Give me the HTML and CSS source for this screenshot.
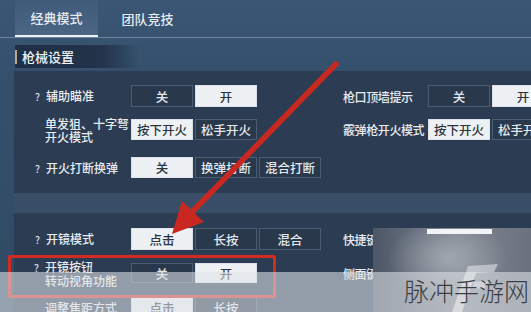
FILE: index.html
```html
<!DOCTYPE html>
<html lang="zh">
<head>
<meta charset="utf-8">
<link rel="stylesheet" href="styles.css">
</head>
<body>
<div class="page">
  <div class="tabs">
    <div class="tab active">经典模式</div>
    <div class="tab">团队竞技</div>
  </div>
  <div class="section-title"><span class="bar"></span><span>枪械设置</span></div>

  <div class="panel panel-1">
    <div class="row r1">
      <div class="half">
        <div class="label"><i>?</i>辅助瞄准</div>
        <div class="seg"><b>关</b><b class="on">开</b></div>
      </div>
      <div class="half right">
        <div class="label">枪口顶墙提示</div>
        <div class="seg"><b>关</b><b class="on">开</b></div>
      </div>
    </div>
    <div class="row r2">
      <div class="half">
        <div class="label two">单发狙、十字弩<br>开火模式</div>
        <div class="seg"><b class="on">按下开火</b><b>松手开火</b></div>
      </div>
      <div class="half right">
        <div class="label">霰弹枪开火模式</div>
        <div class="seg"><b class="on">按下开火</b><b>松手开火</b></div>
      </div>
    </div>
    <div class="row r3">
      <div class="half">
        <div class="label"><i>?</i>开火打断换弹</div>
        <div class="seg"><b class="on">关</b><b>换弹打断</b><b>混合打断</b></div>
      </div>
    </div>
  </div>

  <div class="band"></div>

  <div class="panel panel-2">
    <div class="row s1">
      <div class="half">
        <div class="label"><i>?</i>开镜模式</div>
        <div class="seg"><b class="on">点击</b><b>长按</b><b>混合</b></div>
      </div>
      <div class="half right">
        <div class="label">快捷键位</div>
      </div>
    </div>
    <div class="row s2">
      <div class="half">
        <div class="label two"><i>?</i>开镜按钮<br>转动视角功能</div>
        <div class="seg"><b>关</b><b class="on">开</b></div>
      </div>
      <div class="half right">
        <div class="label">侧面键位</div>
      </div>
    </div>
    <div class="row s3">
      <div class="half">
        <div class="label"><span class="indent">调整焦距方式</span></div>
        <div class="seg"><b class="on">点击</b><b>长按</b></div>
      </div>
    </div>
  </div>

  <div class="pasted"><span class="pasted-bar"></span></div>
  <div class="highlight"></div>

  <svg class="arrow" width="531" height="312" viewBox="0 0 531 312">
    <line x1="336" y1="64" x2="192" y2="212" stroke="#c8281f" stroke-width="5.5" stroke-linecap="round"/>
    <polygon points="172,234 182,201 204,222" fill="#c8281f"/>
  </svg>

  <div class="watermark">
    <svg class="wm-logo" width="60" height="50" viewBox="0 0 60 50">
      <polygon points="20,4 50,2 46,10 28,11 14,50 4,50" fill="#ffffff" fill-opacity="0.45"/>
      <polygon points="26,20 40,19 37,26 24,27" fill="#ffffff" fill-opacity="0.35"/>
    </svg>
    <span class="wm-text">脉冲手游网</span>
  </div>
</div>
</body>
</html>
```

FILE: styles.css
```css
* { box-sizing: border-box; margin: 0; padding: 0; }

html, body {
  width: 531px;
  height: 312px;
  overflow: hidden;
}

body {
  background: #36506c;
  font-family: "Noto Sans CJK SC", "Noto Sans", sans-serif;
  color: #e8ecf0;
}

.page {
  position: relative;
  width: 531px;
  height: 312px;
  overflow: hidden;
  background: linear-gradient(180deg, #3a5674 0%, #34506c 25%, #314a64 100%);
}

.tabs {
  display: flex;
  height: 38px;
  padding-left: 15px;
  border-bottom: 1px solid #6f87a0;
}

.tab {
  width: 83px;
  height: 37px;
  display: flex;
  align-items: center;
  justify-content: center;
  font-size: 13px;
  font-weight: 500;
  color: #e6ebf1;
  margin-right: 8px;
}

.tab.active {
  background: linear-gradient(180deg, #3f5b79 0%, #4a6684 100%);
  border-bottom: 2px solid #eef2f6;
}

.section-title {
  display: flex;
  align-items: center;
  height: 23px;
  margin: 7px 0 0 15px;
  width: 125px;
  font-size: 13px;
  font-weight: 500;
  color: #f0f3f6;
  background: linear-gradient(90deg, #1f3046 0%, #23344a 70%, rgba(35, 52, 74, 0) 100%);
}

.section-title .bar {
  width: 2px;
  height: 14px;
  background: #b9a98a;
  margin-right: 5px;
}

.panel {
  margin-left: 14px;
  background: #2c3d53;
}

.panel-1 {
  margin-top: 3px;
  height: 122px;
  padding-top: 14px;
}

.band {
  height: 20px;
  margin-left: 14px;
  background: #3a4f67;
}

.panel-2 {
  height: 99px;
  padding-top: 15px;
}

.row {
  display: flex;
  align-items: center;
  height: 22px;
}

.r2 { margin-top: 12px; height: 21px; }
.r3 { margin-top: 17px; height: 21px; }
.s2 { margin-top: 13px; height: 20px; }
.s3 { margin-top: 14px; height: 20px; }

.half {
  display: flex;
  align-items: center;
  width: 329px;
  height: 100%;
}

.half.right {
  width: 188px;
}

.label {
  width: 117px;
  flex: none;
  padding-left: 21px;
  font-size: 12px;
  font-weight: 500;
  line-height: 15px;
  white-space: nowrap;
  color: #e8ecf0;
}

.half.right .label {
  width: 85px;
  padding-left: 0;
  letter-spacing: -0.4px;
}

.label i {
  font-style: normal;
  display: inline-block;
  width: 11px;
  font-size: 10px;
  color: #d8dee5;
}

.label.two {
  padding-left: 31px;
  line-height: 13px;
}

.label.two i {
  margin-left: -11px;
}

.label .indent {
  padding-left: 10px;
}

.seg {
  display: flex;
  gap: 2px;
  height: 100%;
}

.seg b {
  width: 62px;
  height: 100%;
  display: flex;
  align-items: center;
  justify-content: center;
  font-weight: 500;
  font-size: 12.5px;
  color: #e3e8ee;
  background: #2a384b;
  border: 1px solid #4b5d73;
}

.seg b.on {
  background: #eef1f4;
  color: #2b3440;
  border-color: #dde2e8;
}

/* pasted blurry screenshot fragment on the right */
.pasted {
  position: absolute;
  left: 373px;
  top: 228px;
  width: 158px;
  height: 84px;
  background:
    radial-gradient(ellipse 60px 40px at 75px 30px, rgba(170, 176, 184, 0.8), rgba(170, 176, 184, 0) 100%),
    linear-gradient(90deg, #4d5767 0%, #6c7481 35%, #7e858f 55%, #6a727e 100%);
}

.pasted-bar {
  position: absolute;
  left: 54px;
  top: 1px;
  width: 65px;
  height: 5px;
  background: #f2f4f6;
}

.highlight {
  position: absolute;
  left: 8px;
  top: 255px;
  width: 268px;
  height: 43px;
  border: 3px solid #d32a22;
  border-radius: 2px;
}

.arrow {
  position: absolute;
  left: 0;
  top: 0;
}

.watermark {
  position: absolute;
  left: 0;
  top: 272px;
  width: 531px;
  height: 40px;
  background: rgba(222, 226, 231, 0.58);
}

.wm-logo {
  position: absolute;
  left: 448px;
  top: -10px;
}

.wm-text {
  position: absolute;
  left: 404px;
  top: 3px;
  font-family: "Noto Sans CJK SC", sans-serif;
  font-weight: 300;
  font-size: 25px;
  line-height: 30px;
  color: #3a3d42;
  letter-spacing: 0;
}
```
